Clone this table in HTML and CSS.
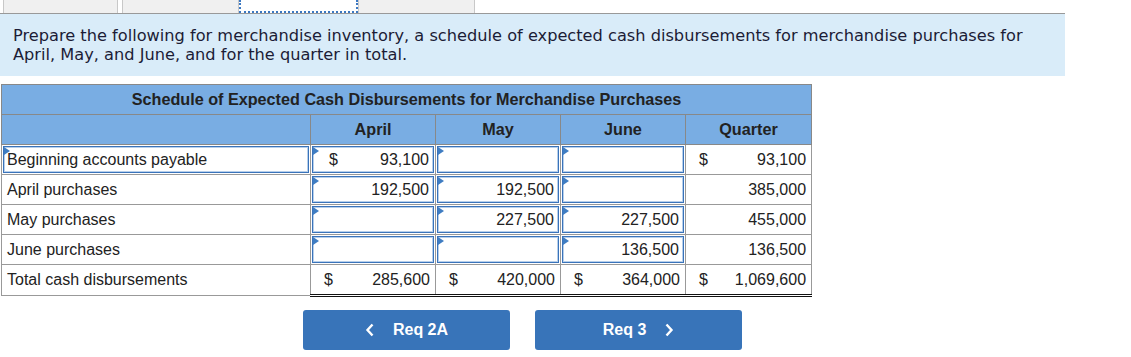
FILE: index.html
```html
<!DOCTYPE html>
<html lang="en">
<head>
    <meta charset="UTF-8">
    <title>Schedule of Expected Cash Disbursements</title>
    <link rel="stylesheet" href="styles.css">
</head>
<body>
    <div class="tabs">
        <div class="tab first"></div>
        <div class="tab"></div>
        <div class="tab active"></div>
        <div class="tab"></div>
    </div>

    <div class="prompt">
        Prepare the following for merchandise inventory, a schedule of expected cash disbursements for merchandise purchases for April, May, and June, and for the quarter in total.
    </div>

    <table class="schedule">
        <colgroup>
            <col class="col-label">
            <col class="col-num">
            <col class="col-num">
            <col class="col-num">
            <col class="col-quarter">
        </colgroup>
        <tr class="title-row">
            <th colspan="5">Schedule of Expected Cash Disbursements for Merchandise Purchases</th>
        </tr>
        <tr class="head-row">
            <th></th>
            <th>April</th>
            <th>May</th>
            <th>June</th>
            <th>Quarter</th>
        </tr>
        <tr>
            <td class="in"><div class="field label-field">Beginning accounts payable</div></td>
            <td class="in"><div class="field"><span class="cur">$</span>93,100</div></td>
            <td class="in"><div class="field"></div></td>
            <td class="in"><div class="field"></div></td>
            <td class="num"><span class="cur">$</span>93,100</td>
        </tr>
        <tr>
            <td class="label">April purchases</td>
            <td class="in"><div class="field">192,500</div></td>
            <td class="in"><div class="field">192,500</div></td>
            <td class="in"><div class="field"></div></td>
            <td class="num">385,000</td>
        </tr>
        <tr>
            <td class="label">May purchases</td>
            <td class="in"><div class="field"></div></td>
            <td class="in"><div class="field">227,500</div></td>
            <td class="in"><div class="field">227,500</div></td>
            <td class="num">455,000</td>
        </tr>
        <tr>
            <td class="label">June purchases</td>
            <td class="in"><div class="field"></div></td>
            <td class="in"><div class="field"></div></td>
            <td class="in"><div class="field">136,500</div></td>
            <td class="num">136,500</td>
        </tr>
        <tr class="total-row">
            <td class="label">Total cash disbursements</td>
            <td class="num"><span class="cur">$</span>285,600</td>
            <td class="num"><span class="cur">$</span>420,000</td>
            <td class="num"><span class="cur">$</span>364,000</td>
            <td class="num"><span class="cur">$</span>1,069,600</td>
        </tr>
    </table>

    <div class="nav">
        <button class="nav-btn">
            <svg width="10" height="14" viewBox="0 0 10 14"><path d="M7.5 1.5 L2.5 7 L7.5 12.5" fill="none" stroke="#fff" stroke-width="2.4"/></svg>
            <span>Req 2A</span>
        </button>
        <button class="nav-btn">
            <span>Req 3</span>
            <svg width="10" height="14" viewBox="0 0 10 14"><path d="M2.5 1.5 L7.5 7 L2.5 12.5" fill="none" stroke="#fff" stroke-width="2.4"/></svg>
        </button>
    </div>
</body>
</html>
```

FILE: styles.css
```css
body {
    margin: 0;
    font-family: 'Liberation Sans', Arial, sans-serif;
    color: #222;
    background: #fff;
}
.tabs {
    display: flex;
    width: 1062px;
    height: 13px;
    border-bottom: 1px solid #999;
    padding-left: 3px;
}
.tab {
    width: 117px;
    box-sizing: border-box;
    background: #f0f0f0;
    border-left: 1px solid #c8c8c8;
    border-right: 1px solid #c8c8c8;
}
.tab.first {
    width: 115px;
    margin-right: 4px;
}
.tab.active {
    width: 119px;
    background: #fff;
    border: 2px dotted #3b78c2;
    border-top: none;
}
.prompt {
    width: 1065px;
    box-sizing: border-box;
    background: #d9ecf9;
    padding: 12px 38px 12px 13px;
    font-family: 'DejaVu Sans', Verdana, sans-serif;
    font-size: 16.2px;
    line-height: 19px;
    color: #1c1c36;
}
.schedule {
    margin: 8px 0 0 1px;
    border-collapse: collapse;
    table-layout: fixed;
    width: 811px;
    font-size: 16px;
    border: 1px solid #888;
}
.col-label { width: 309px; }
.col-num { width: 125px; }
.col-quarter { width: 126px; }
.schedule th {
    background: #79ade3;
    font-weight: bold;
    font-size: 16.2px;
    height: 29px;
    padding: 0;
    border: 1px solid #888;
    color: #222;
}
.schedule td {
    height: 29px;
    padding: 0;
    border: 1px solid #999;
    white-space: nowrap;
}
.schedule td.label {
    padding-left: 5px;
}
.schedule td.num {
    text-align: right;
    padding-right: 5px;
}
.schedule td.in {
    height: 27px;
    padding: 1px;
}
.field {
    position: relative;
    height: 27px;
    box-sizing: border-box;
    border: 1px solid #3a73ba;
    box-shadow: inset 0 0 0 1px #b7cfea;
    background: #fff;
    text-align: right;
    padding: 4px 4px 0 0;
}
.field::before {
    content: '';
    position: absolute;
    left: 0;
    top: 0;
    border-left: 6px solid #3f7dc2;
    border-top: 4px solid transparent;
    border-bottom: 4px solid transparent;
}
.label-field {
    text-align: left;
    padding-left: 3px;
}
.cur {
    float: left;
    padding-left: 16px;
}
.schedule td.num .cur {
    padding-left: 13px;
}
.total-row td.num {
    border-top: 1px solid #111;
    border-bottom: 3px double #111;
}
.nav {
    display: flex;
    gap: 25px;
    padding: 13px 0 0 303px;
}
.nav-btn {
    display: flex;
    align-items: center;
    justify-content: center;
    gap: 18px;
    width: 207px;
    height: 40px;
    border: none;
    border-radius: 3px;
    background: #3874b9;
    color: #fff;
    font-family: 'Liberation Sans', Arial, sans-serif;
    font-weight: bold;
    font-size: 16px;
}
```
